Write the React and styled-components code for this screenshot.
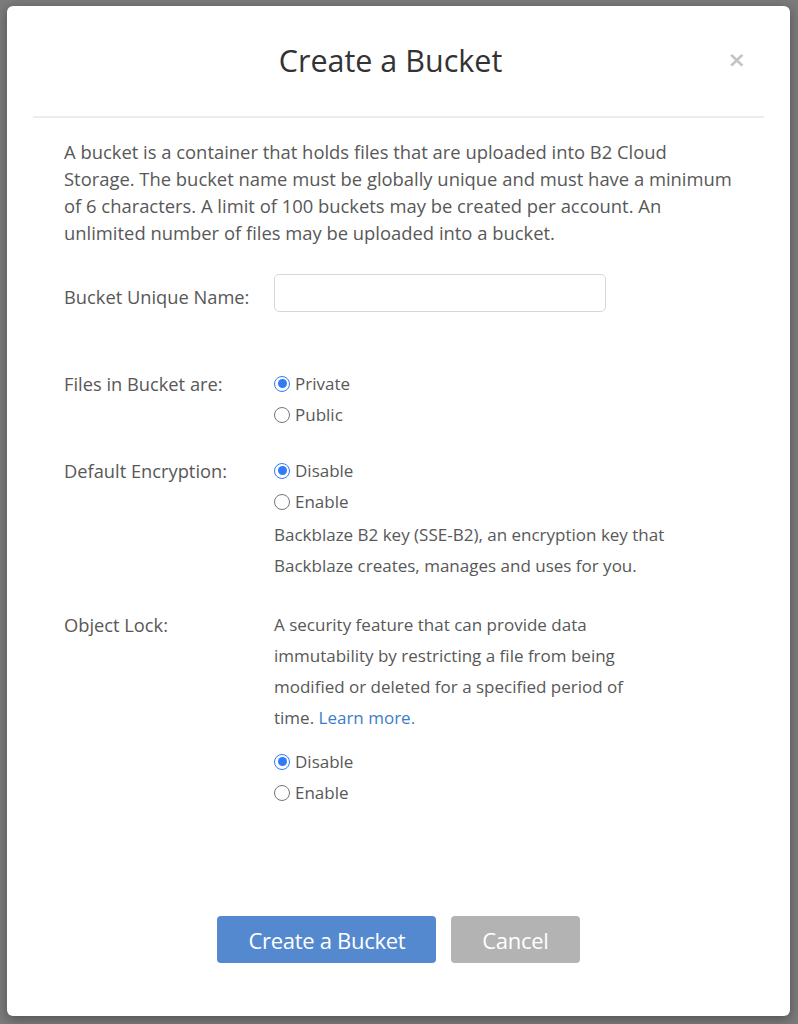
import React, { useState } from 'react';
import styled, { createGlobalStyle } from 'styled-components';

const GlobalStyle = createGlobalStyle`
  html, body {
    margin: 0;
    padding: 0;
    background: #7b7b7b;
    font-family: "Open Sans", "Noto Sans", sans-serif;
  }
`;

const Overlay = styled.div`
  display: flex;
  justify-content: center;
  padding: 6px 8px 8px 7px;
  min-height: 1024px;
  box-sizing: border-box;
`;

const Modal = styled.div`
  width: 783px;
  height: 1010px;
  background: #fff;
  border-radius: 6px;
  box-shadow: 0 3px 12px rgba(0, 0, 0, 0.35);
  display: flex;
  flex-direction: column;
  box-sizing: border-box;
`;

const Header = styled.div`
  position: relative;
  height: 110px;
  margin: 0 26px;
  border-bottom: 2px solid #ececec;
  display: flex;
  align-items: center;
  justify-content: center;
`;

const Title = styled.h2`
  margin: 0 16px 2px 0;
  font-size: 30.5px;
  font-weight: 400;
  color: #333;
`;

const Close = styled.button`
  position: absolute;
  right: 18px;
  top: 43px;
  border: none;
  background: none;
  padding: 0;
  font-family: "DejaVu Sans", sans-serif;
  font-size: 22px;
  font-weight: 700;
  color: #c4c4c4;
  line-height: 1;
  cursor: pointer;
`;

const Body = styled.div`
  padding: 20px 57px 0;
  color: #585858;
  font-size: 17px;
`;

const Intro = styled.p`
  margin: 0;
  font-size: 18.4px;
  line-height: 27px;
  max-width: 670px;
`;

const Row = styled.div`
  display: grid;
  grid-template-columns: 210px 1fr;
  margin-top: ${p => p.gap}px;
`;

const Label = styled.div`
  font-size: 18.3px;
  line-height: 31px;
  padding-top: ${p => p.offset || 0}px;
`;

const Input = styled.input`
  width: 332px;
  height: 38px;
  box-sizing: border-box;
  border: 1.5px solid #d6d6d6;
  border-radius: 5px;
  font-family: inherit;
  font-size: 16px;
  padding: 0 10px;
  outline: none;
`;

const Options = styled.div`
  display: flex;
  flex-direction: column;
`;

const Option = styled.label`
  display: flex;
  align-items: center;
  gap: 5px;
  line-height: 31px;
  cursor: pointer;
`;

const Dot = styled.span`
  width: 16px;
  height: 16px;
  box-sizing: border-box;
  border-radius: 50%;
  border: ${p => (p.on ? '1.5px solid #2f7cf6' : '1px solid #767676')};
  display: flex;
  align-items: center;
  justify-content: center;
  background: #fff;
  &::after {
    content: '';
    width: 9px;
    height: 9px;
    border-radius: 50%;
    background: ${p => (p.on ? '#2f7cf6' : 'transparent')};
  }
`;

const Note = styled.p`
  margin: ${p => p.gap || 0}px 0 0;
  line-height: 31px;
  max-width: ${p => p.width}px;
`;

const Link = styled.a`
  color: #3d7cc9;
  text-decoration: none;
`;

const Footer = styled.div`
  margin-top: auto;
  padding-bottom: 53px;
  display: flex;
  justify-content: center;
  gap: 15px;
`;

const Button = styled.button`
  height: 47px;
  padding: 0 31px;
  border: none;
  border-radius: 4px;
  background: ${p => (p.primary ? '#5589cf' : '#b3b3b3')};
  color: #fff;
  font-family: "Open Sans", sans-serif;
  font-size: 22px;
  font-weight: 400;
  letter-spacing: -0.3px;
  cursor: pointer;
`;

const RadioGroup = ({ options, value, onChange }) => (
  <Options>
    {options.map(o => (
      <Option key={o} onClick={() => onChange(o)}>
        <Dot on={value === o} />
        {o}
      </Option>
    ))}
  </Options>
);

const App = () => {
  const [files, setFiles] = useState('Private');
  const [enc, setEnc] = useState('Disable');
  const [lock, setLock] = useState('Disable');

  return (
    <>
      <GlobalStyle />
      <Overlay>
        <Modal>
          <Header>
            <Title>Create a Bucket</Title>
            <Close>×</Close>
          </Header>
          <Body>
            <Intro>
              A bucket is a container that holds files that are uploaded into B2 Cloud
              Storage. The bucket name must be globally unique and must have a minimum
              of 6 characters. A limit of 100 buckets may be created per account. An
              unlimited number of files may be uploaded into a bucket.
            </Intro>
            <Row gap={28}>
              <Label offset={7}>Bucket Unique Name:</Label>
              <div>
                <Input type="text" />
              </div>
            </Row>
            <Row gap={56}>
              <Label offset={-2}>Files in Bucket are:</Label>
              <RadioGroup options={['Private', 'Public']} value={files} onChange={setFiles} />
            </Row>
            <Row gap={25}>
              <Label offset={-2}>Default Encryption:</Label>
              <Options>
                <RadioGroup options={['Disable', 'Enable']} value={enc} onChange={setEnc} />
                <Note gap={2} width={400}>
                  Backblaze B2 key (SSE-B2), an encryption key that Backblaze creates,
                  manages and uses for you.
                </Note>
              </Options>
            </Row>
            <Row gap={28}>
              <Label>Object Lock:</Label>
              <Options>
                <Note width={375}>
                  A security feature that can provide data immutability by restricting a
                  file from being modified or deleted for a specified period of
                  time. <Link href="#">Learn more.</Link>
                </Note>
                <div style={{ height: 13 }} />
                <RadioGroup options={['Disable', 'Enable']} value={lock} onChange={setLock} />
              </Options>
            </Row>
          </Body>
          <Footer>
            <Button primary>Create a Bucket</Button>
            <Button>Cancel</Button>
          </Footer>
        </Modal>
      </Overlay>
    </>
  );
};

export default App;
